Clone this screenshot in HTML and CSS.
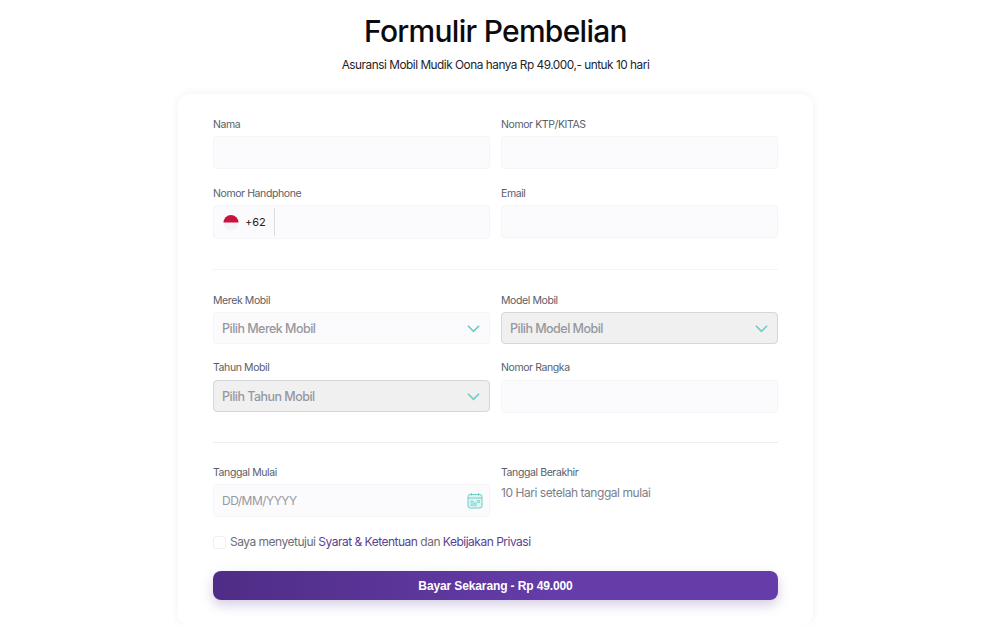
FILE: index.html
```html
<!DOCTYPE html>
<html lang="en">
<head>
    <meta charset="UTF-8">
    <meta name="viewport" content="width=device-width, initial-scale=1.0">
    <title>Formulir Pembelian</title>
    <link rel="stylesheet" href="styles.css">
</head>
<body>
    <div class="page">
        <h1 class="title">Formulir Pembelian</h1>
        <p class="subtitle">Asuransi Mobil Mudik Oona hanya Rp 49.000,- untuk 10 hari</p>
        <form class="card">
            <div class="form-grid">
                <div class="field">
                    <label class="field-label">Nama</label>
                    <div class="input"></div>
                </div>
                <div class="field">
                    <label class="field-label">Nomor KTP/KITAS</label>
                    <div class="input"></div>
                </div>
                <div class="field">
                    <label class="field-label">Nomor Handphone</label>
                    <div class="input phone">
                        <svg class="flag" viewBox="0 0 16 16">
                            <circle cx="8" cy="8" r="7.5" fill="#f4f4f6"/>
                            <path d="M.5 7.5a7.5 7.5 0 0 1 15 0z" fill="#c8143c"/>
                        </svg>
                        <span class="phone-code">+62</span>
                    </div>
                </div>
                <div class="field">
                    <label class="field-label">Email</label>
                    <div class="input"></div>
                </div>
            </div>
            <hr class="divider">
            <div class="form-grid form-grid-tight">
                <div class="field">
                    <label class="field-label">Merek Mobil</label>
                    <div class="input select">
                        <span>Pilih Merek Mobil</span>
                        <svg class="chevron" viewBox="0 0 14 9"><path d="M1 1.5l6 6 6-6" fill="none" stroke="#6fc9c6" stroke-width="1.7"/></svg>
                    </div>
                </div>
                <div class="field">
                    <label class="field-label">Model Mobil</label>
                    <div class="input select disabled">
                        <span>Pilih Model Mobil</span>
                        <svg class="chevron" viewBox="0 0 14 9"><path d="M1 1.5l6 6 6-6" fill="none" stroke="#6fc9c6" stroke-width="1.7"/></svg>
                    </div>
                </div>
                <div class="field">
                    <label class="field-label label-low">Tahun Mobil</label>
                    <div class="input select disabled">
                        <span>Pilih Tahun Mobil</span>
                        <svg class="chevron" viewBox="0 0 14 9"><path d="M1 1.5l6 6 6-6" fill="none" stroke="#6fc9c6" stroke-width="1.7"/></svg>
                    </div>
                </div>
                <div class="field">
                    <label class="field-label label-low">Nomor Rangka</label>
                    <div class="input"></div>
                </div>
            </div>
            <hr class="divider divider-second">
            <div class="form-grid">
                <div class="field">
                    <label class="field-label">Tanggal Mulai</label>
                    <div class="input date">
                        <span>DD/MM/YYYY</span>
                        <svg class="calendar" viewBox="0 0 16 17" fill="none" stroke="#6fcfc6">
                            <rect x="1" y="2.5" width="14" height="13.5" rx="2" fill="#dcf5f2"/>
                            <path d="M1 6h14M4.5 1v2.5M11.5 1v2.5"/>
                            <path d="M4 9h2v4.5H4zM7.2 11h2v2.5h-2zM10.4 8.5h2v2h-2z" stroke-width=".8"/>
                        </svg>
                    </div>
                </div>
                <div class="field">
                    <label class="field-label">Tanggal Berakhir</label>
                    <div class="end-date">10 Hari setelah tanggal mulai</div>
                </div>
            </div>
            <div class="agree">
                <span class="checkbox"></span>
                <span>Saya menyetujui <a class="link">Syarat &amp; Ketentuan</a> dan <a class="link">Kebijakan Privasi</a></span>
            </div>
            <button class="pay-btn" type="button">Bayar Sekarang - Rp 49.000</button>
        </form>
    </div>
</body>
</html>
```

FILE: styles.css
```css
body {
    margin: 0;
    background: #ffffff;
    font-family: 'Inter', 'Liberation Sans', sans-serif;
    color: #111111;
}
.page {
    width: 991px;
    padding-top: 11px;
    display: flex;
    flex-direction: column;
    align-items: center;
}
.title {
    margin: 0;
    font-size: 30px;
    line-height: 40px;
    font-weight: 500;
    letter-spacing: -0.72px;
    color: #0b0b0f;
}
.subtitle {
    margin: 4px 0 0;
    font-size: 11.8px;
    line-height: 20px;
    letter-spacing: -0.47px;
    color: #24242b;
}
.card {
    box-sizing: border-box;
    width: 635px;
    height: 531px;
    margin-top: 19px;
    padding: 22px 35px 0;
    background: #ffffff;
    border-radius: 12px;
    box-shadow: 0 0 8px rgba(60, 50, 110, 0.07);
}
.form-grid {
    display: grid;
    grid-template-columns: 277px 277px;
    column-gap: 11px;
    row-gap: 16px;
}
.form-grid-tight {
    row-gap: 15px;
}
.field-label {
    display: block;
    font-size: 10.5px;
    line-height: 18px;
    letter-spacing: -0.4px;
    margin-bottom: 2px;
    color: #5a5e6a;
}
.label-low {
    margin-bottom: 3px;
}
.input {
    box-sizing: border-box;
    height: 33px;
    display: flex;
    align-items: center;
    padding: 0 9px 0 8px;
    background: #fbfbfd;
    border: 1px solid #f5f5f8;
    border-radius: 4px;
    font-size: 12.5px;
    letter-spacing: -0.52px;
    color: #96989f;
}
.phone {
    height: 34px;
}
.flag {
    width: 16px;
    height: 16px;
    margin: 1px 0 0 1px;
}
.phone-code {
    margin-left: 6px;
    padding-right: 8px;
    height: 28px;
    line-height: 28px;
    font-size: 11px;
    letter-spacing: -0.1px;
    color: #1d1d24;
    border-right: 1px solid #dcdce2;
}
.select,
.date {
    justify-content: space-between;
    font-weight: 500;
}
.select {
    height: 32px;
}
.date {
    font-size: 12px;
    font-weight: 400;
}
.disabled {
    background: #f0f0f1;
    border-color: #d6d6da;
}
.chevron {
    width: 13px;
    height: 9px;
}
.calendar {
    width: 16px;
    height: 17px;
    margin-right: -3px;
}
.end-date {
    padding-top: 1px;
    font-size: 12px;
    line-height: 16px;
    letter-spacing: -0.45px;
    color: #7a7f8a;
}
.divider {
    height: 1px;
    margin: 30px 0 22px;
    border: none;
    background: #f4f4f6;
}
.divider-second {
    margin: 29px 0 21px;
    background: #eeeef1;
}
.agree {
    display: flex;
    align-items: center;
    gap: 4px;
    margin-top: 17px;
    font-size: 12px;
    line-height: 16px;
    letter-spacing: -0.5px;
    color: #6b6e78;
}
.checkbox {
    box-sizing: border-box;
    width: 13px;
    height: 13px;
    border: 1px solid #f0f0f3;
    border-radius: 3px;
}
.link {
    color: #5a4290;
}
.pay-btn {
    display: block;
    width: 100%;
    height: 29px;
    margin-top: 21px;
    border: none;
    border-radius: 8px;
    background: linear-gradient(90deg, #4f2d86 0%, #653ca8 60%, #653ca8 100%);
    box-shadow: 0 5px 12px rgba(88, 56, 150, 0.25);
    color: #ffffff;
    font-family: 'Liberation Sans', sans-serif;
    font-size: 12px;
    font-weight: 700;
    letter-spacing: -0.12px;
}
```
